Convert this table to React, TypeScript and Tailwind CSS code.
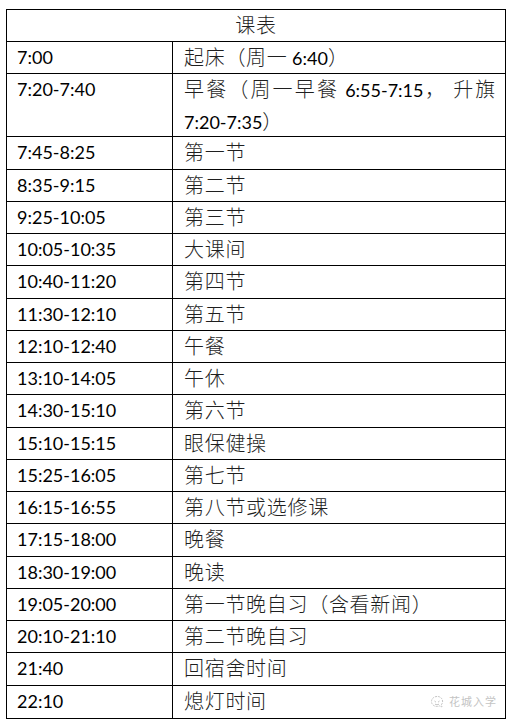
import React from "react";

const rows: [string, string][] = [
  ["7:45-8:25", "第一节"],
  ["8:35-9:15", "第二节"],
  ["9:25-10:05", "第三节"],
  ["10:05-10:35", "大课间"],
  ["10:40-11:20", "第四节"],
  ["11:30-12:10", "第五节"],
  ["12:10-12:40", "午餐"],
  ["13:10-14:05", "午休"],
  ["14:30-15:10", "第六节"],
  ["15:10-15:15", "眼保健操"],
  ["15:25-16:05", "第七节"],
  ["16:15-16:55", "第八节或选修课"],
  ["17:15-18:00", "晚餐"],
  ["18:30-19:00", "晚读"],
  ["19:05-20:00", "第一节晚自习（含看新闻）"],
  ["20:10-21:10", "第二节晚自习"],
  ["21:40", "回宿舍时间"],
  ["22:10", "熄灯时间"],
];

// wrap Chinese runs so they get the wider grid spacing, digits stay normal
function Mixed({ text }: { text: string }) {
  const parts = text.split(/([\u3000-\u9fff\uff00-\uffef]+)/);
  return (
    <>
      {parts.map((p, i) =>
        /[\u3000-\u9fff\uff00-\uffef]/.test(p) ? (
          <span key={i} className="tracking-[0.7px] text-[20px] font-light text-[#1f1f1f]">
            {p}
          </span>
        ) : (
          <span key={i}>{p}</span>
        )
      )}
    </>
  );
}

function Row({ time, label }: { time: string; label: string }) {
  return (
    <div className="flex h-[32.25px] border-b border-black">
      <div className="w-[166px] shrink-0 border-r border-black pl-[10px] leading-[31px]">{time}</div>
      <div className="flex-1 pl-[11px] leading-[31px] whitespace-nowrap">
        <Mixed text={label} />
      </div>
    </div>
  );
}

export default function App() {
  return (
    <div className="min-h-screen bg-white pt-[9px] pl-[6px]">
      <div className="relative w-[500px] border border-black text-[18px] text-black font-['Lato','Noto_Sans_CJK_SC',sans-serif]">
        <div className="flex h-[32px] items-start justify-center border-b border-black leading-[31px]">
          <Mixed text="课表" />
        </div>

        <Row time="7:00" label="起床（周一 6:40）" />

        <div className="flex h-[63px] border-b border-black">
          <div className="w-[166px] shrink-0 border-r border-black pl-[10px] leading-[31px]">7:20-7:40</div>
          <div className="flex-1 pl-[11px] pr-[9px] leading-[31px]">
            <div className="text-justify [text-align-last:justify] whitespace-nowrap">
              <Mixed text="早餐（周一早餐 6:55-7:15， 升旗" />
            </div>
            <div>
              <Mixed text="7:20-7:35）" />
            </div>
          </div>
        </div>

        {rows.map(([t, l], i) => (
          <div key={t} className={i === rows.length - 1 ? "[&>div]:border-b-0" : ""}>
            <Row time={t} label={l} />
          </div>
        ))}

        <div className="absolute right-[8px] bottom-[8px] flex items-center gap-[5px] text-[#c4c4c4]">
          <svg width="14" height="14" viewBox="0 0 14 14" fill="none" stroke="currentColor" strokeWidth="1">
            <path d="M7 1.5a5.5 5 0 1 0 2.6 9.4l2.4 1.1-.7-2.2A5 5 0 0 0 7 1.5z" strokeDasharray="2 1" />
            <path d="M4.5 6l1.5 1.2M9.5 6 8 7.2M5 9.2q2 1.2 4 0" />
          </svg>
          <span className="text-[11px] tracking-[1px] font-['Noto_Sans_CJK_SC',sans-serif]">花城入学</span>
        </div>
      </div>
    </div>
  );
}
